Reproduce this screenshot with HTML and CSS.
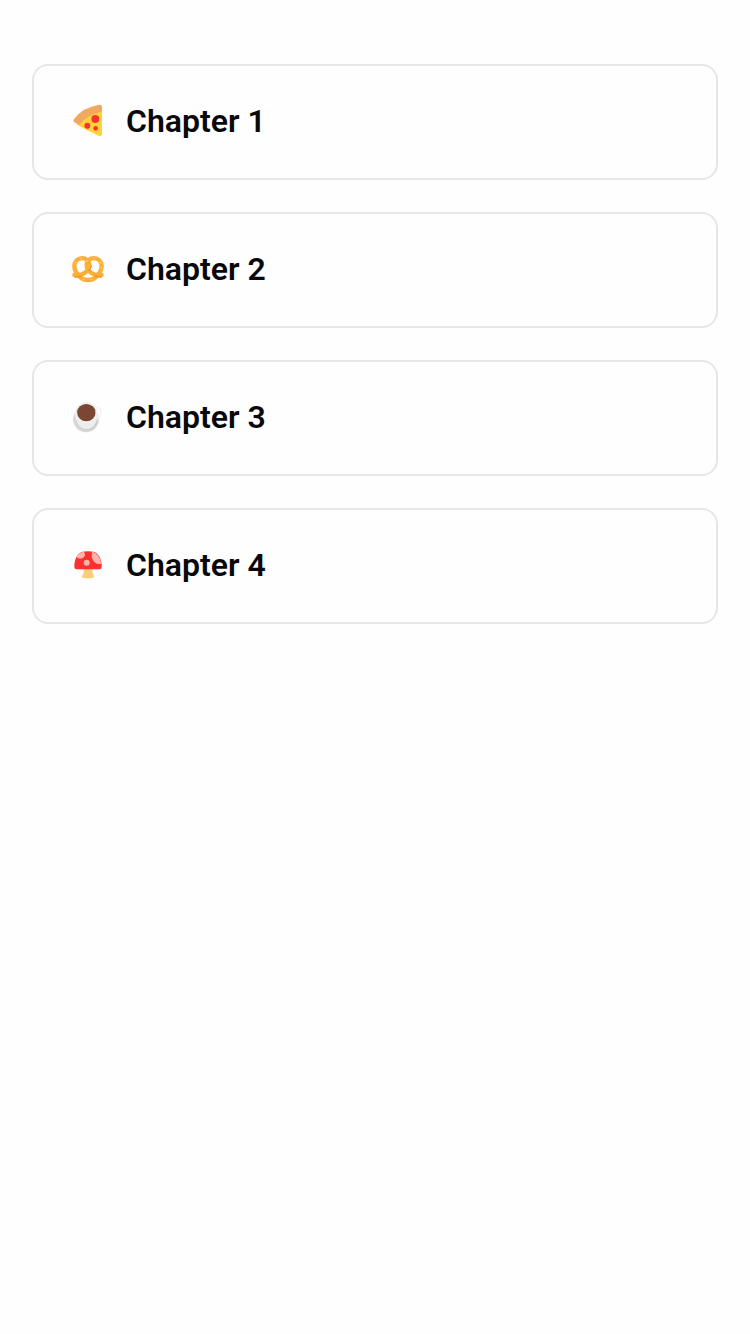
FILE: index.html
```html
<!DOCTYPE html>
<html lang="en">
<head>
<meta charset="utf-8">
<title>Chapters</title>
<link rel="stylesheet" href="styles.css">
</head>
<body>
<main class="chapters">
  <a class="card">
    <svg class="icon" viewBox="0 0 132 132" aria-hidden="true">
      <path fill="#ffd43a" d="M44 70Q67 49 105 38L108 36V108Q106 117 97 113L32 80Z"/>
      <path fill="#f2a95f" d="M25 73Q20 69 25 62Q50 28 100 20Q108 19 108 26V38Q108 42 102 43Q66 50 43 78Q40 81 36 79Z"/>
      <g fill="#fa3230"><circle cx="88" cy="63" r="12"/><circle cx="64" cy="83" r="9"/><circle cx="89" cy="91" r="7"/></g>
    </svg>
    <span class="title">Chapter 1</span>
  </a>
  <a class="card">
    <svg class="icon" viewBox="0 0 132 132" aria-hidden="true">
      <g fill="none" stroke="#fdae35" stroke-width="13" stroke-linecap="round" stroke-linejoin="round">
        <path d="M38 86Q43 102 66 102Q89 102 94 86"/>
        <path d="M25 87C50 92 70 74 70 56C70 31 27 28 25 60C25 70 30 80 37 88"/>
        <path d="M107 87C82 92 62 74 62 56C62 31 105 28 107 60C107 70 102 80 95 88"/>
      </g>
      <g fill="none" stroke="#e58b28" stroke-width="3"><path d="M24 93Q34 95 46 90M108 93Q98 95 86 90M68 75Q75 67 77 58"/></g>
      <g fill="#ffe4a5"><circle cx="28" cy="50" r="2"/><circle cx="46" cy="37" r="2"/><circle cx="63" cy="45" r="2"/><circle cx="84" cy="37" r="2"/><circle cx="104" cy="50" r="2"/><circle cx="106" cy="66" r="2"/><circle cx="53" cy="101" r="2"/><circle cx="76" cy="101" r="2"/></g>
    </svg>
    <span class="title">Chapter 2</span>
  </a>
  <a class="card">
    <svg class="icon" viewBox="0 0 132 132" aria-hidden="true">
      <circle cx="60" cy="76" r="39" fill="#d9d9da"/>
      <path fill="#c4c3c6" d="M31 78Q31 106 62 109Q89 107 94 80Z"/>
      <path d="M90 43Q105 39 105 53Q105 68 90 74" fill="none" stroke="#f4f4f5" stroke-width="6"/>
      <path fill="#ededee" d="M28 54Q28 105 62 106Q93 105 96 54Z"/>
      <ellipse cx="61" cy="56" rx="33" ry="32" fill="#f1f1f2"/>
      <path fill="#a3a1a3" d="M31 54A31 30 0 0 1 90 51Z"/>
      <ellipse cx="61" cy="56" rx="27.5" ry="26" fill="#7d4533"/>
    </svg>
    <span class="title">Chapter 3</span>
  </a>
  <a class="card">
    <svg class="icon" viewBox="0 0 132 132" aria-hidden="true">
      <path fill="#ffce7c" d="M53 80H79Q78 93 84 101Q84 109 76 109H56Q48 109 48 101Q55 93 53 80Z"/>
      <path fill="#fc302f" d="M46 30Q66 25 86 30Q104 40 107 67V75Q107 82 100 82H32Q25 82 25 75V67Q28 40 46 30Z"/>
      <g fill="#ffb4aa"><path d="M31 45Q38 33 53 28.500Q62 42 50 48Q40 53 31 45Z"/><path d="M79 28.500Q100 36 106 65Q94 69 84 59Q73 46 79 28.500Z"/><circle cx="62" cy="62" r="9"/></g>
    </svg>
    <span class="title">Chapter 4</span>
  </a>
</main>
</body>
</html>
```
FILE: styles.css
```css
* {
  box-sizing: border-box;
}

body {
  margin: 0;
  background: #fefefe;
  color: #09090b;
  font-family: Roboto, sans-serif;
}

.chapters {
  display: flex;
  flex-direction: column;
  gap: 32px;
  padding: 64px 32px;
}

.card {
  display: flex;
  align-items: center;
  gap: 16px;
  height: 116px;
  padding: 0 32px 4px;
  border: 2px solid #e6e6e9;
  border-radius: 16px;
}

.icon {
  width: 44px;
  height: 44px;
}

.title {
  padding-top: 2px;
  font-size: 32px;
  font-weight: 600;
  line-height: 48px;
}
```
